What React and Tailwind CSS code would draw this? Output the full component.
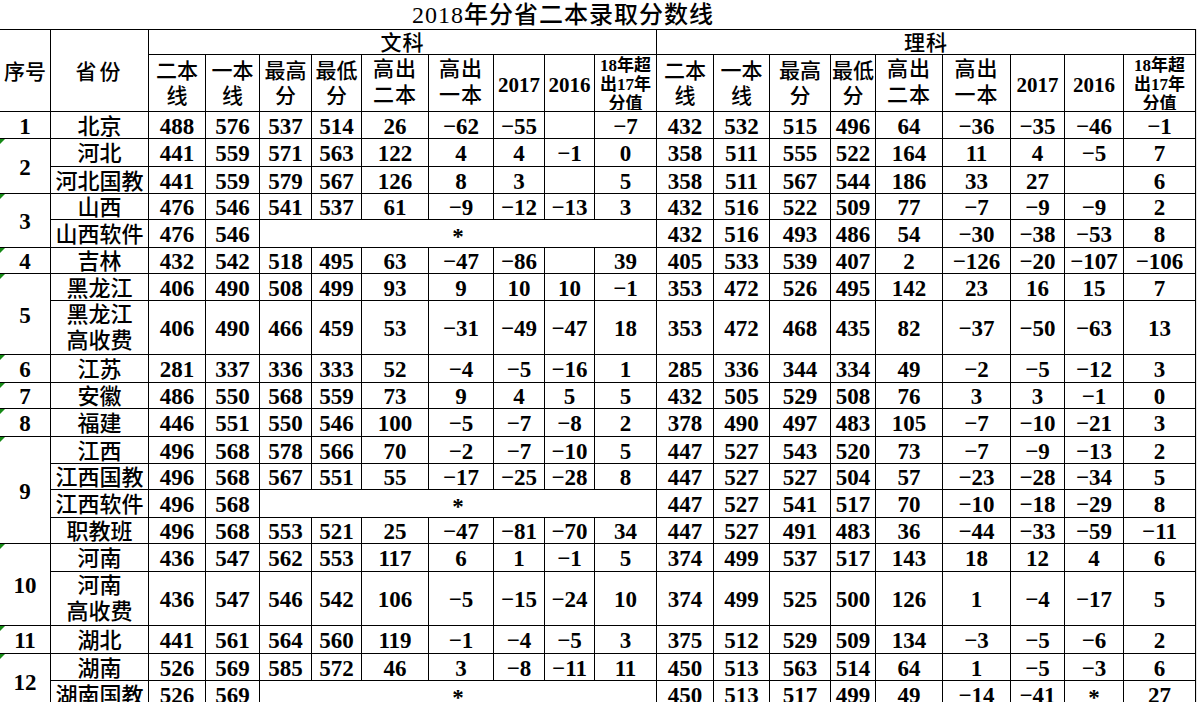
import React from "react";

const M = "−";

const colW = [
  "w-[51px]", "w-[98px]", "w-[57px]", "w-[54px]", "w-[52px]", "w-[50px]", "w-[67px]", "w-[65px]", "w-[51px]", "w-[50px]", "w-[62px]",
  "w-[57px]", "w-[56px]", "w-[61px]", "w-[45px]", "w-[67px]", "w-[68px]", "w-[54px]", "w-[59px]", "w-[72px]",
];

const rows = [
  { seq: "1", span: 1, prov: "北京", h: "h-[27px]", wen: ["488", "576", "537", "514", "26", M + "62", M + "55", "", M + "7"], li: ["432", "532", "515", "496", "64", M + "36", M + "35", M + "46", M + "1"] },
  { seq: "2", span: 2, tri: true, prov: "河北", h: "h-[28px]", wen: ["441", "559", "571", "563", "122", "4", "4", M + "1", "0"], li: ["358", "511", "555", "522", "164", "11", "4", M + "5", "7"] },
  { prov: "河北国教", h: "h-[27px]", wen: ["441", "559", "579", "567", "126", "8", "3", "", "5"], li: ["358", "511", "567", "544", "186", "33", "27", "", "6"] },
  { seq: "3", span: 2, tri: true, prov: "山西", h: "h-[26px]", wen: ["476", "546", "541", "537", "61", M + "9", M + "12", M + "13", "3"], li: ["432", "516", "522", "509", "77", M + "7", M + "9", M + "9", "2"] },
  { prov: "山西软件", h: "h-[28px]", wen: ["476", "546", "*"], li: ["432", "516", "493", "486", "54", M + "30", M + "38", M + "53", "8"] },
  { seq: "4", span: 1, tri: true, prov: "吉林", h: "h-[26px]", wen: ["432", "542", "518", "495", "63", M + "47", M + "86", "", "39"], li: ["405", "533", "539", "407", "2", M + "126", M + "20", M + "107", M + "106"] },
  { seq: "5", span: 2, tri: true, prov: "黑龙江", h: "h-[27px]", wen: ["406", "490", "508", "499", "93", "9", "10", "10", M + "1"], li: ["353", "472", "526", "495", "142", "23", "16", "15", "7"] },
  { prov: "黑龙江\n高收费", multi: true, h: "h-[54px]", wen: ["406", "490", "466", "459", "53", M + "31", M + "49", M + "47", "18"], li: ["353", "472", "468", "435", "82", M + "37", M + "50", M + "63", "13"] },
  { seq: "6", span: 1, tri: true, prov: "江苏", h: "h-[28px]", wen: ["281", "337", "336", "333", "52", M + "4", M + "5", M + "16", "1"], li: ["285", "336", "344", "334", "49", M + "2", M + "5", M + "12", "3"] },
  { seq: "7", span: 1, tri: true, prov: "安徽", h: "h-[26px]", wen: ["486", "550", "568", "559", "73", "9", "4", "5", "5"], li: ["432", "505", "529", "508", "76", "3", "3", M + "1", "0"] },
  { seq: "8", span: 1, tri: true, prov: "福建", h: "h-[28px]", wen: ["446", "551", "550", "546", "100", M + "5", M + "7", M + "8", "2"], li: ["378", "490", "497", "483", "105", M + "7", M + "10", M + "21", "3"] },
  { seq: "9", span: 4, tri: true, prov: "江西", h: "h-[27px]", wen: ["496", "568", "578", "566", "70", M + "2", M + "7", M + "10", "5"], li: ["447", "527", "543", "520", "73", M + "7", M + "9", M + "13", "2"] },
  { prov: "江西国教", h: "h-[26px]", wen: ["496", "568", "567", "551", "55", M + "17", M + "25", M + "28", "8"], li: ["447", "527", "527", "504", "57", M + "23", M + "28", M + "34", "5"] },
  { prov: "江西软件", h: "h-[28px]", wen: ["496", "568", "*"], li: ["447", "527", "541", "517", "70", M + "10", M + "18", M + "29", "8"] },
  { prov: "职教班", h: "h-[26px]", wen: ["496", "568", "553", "521", "25", M + "47", M + "81", M + "70", "34"], li: ["447", "527", "491", "483", "36", M + "44", M + "33", M + "59", M + "11"] },
  { seq: "10", span: 2, tri: true, prov: "河南", h: "h-[28px]", wen: ["436", "547", "562", "553", "117", "6", "1", M + "1", "5"], li: ["374", "499", "537", "517", "143", "18", "12", "4", "6"] },
  { prov: "河南\n高收费", multi: true, h: "h-[53px]", wen: ["436", "547", "546", "542", "106", M + "5", M + "15", M + "24", "10"], li: ["374", "499", "525", "500", "126", "1", M + "4", M + "17", "5"] },
  { seq: "11", span: 1, tri: true, prov: "湖北", h: "h-[28px]", wen: ["441", "561", "564", "560", "119", M + "1", M + "4", M + "5", "3"], li: ["375", "512", "529", "509", "134", M + "3", M + "5", M + "6", "2"] },
  { seq: "12", span: 2, tri: true, prov: "湖南", h: "h-[27px]", wen: ["526", "569", "585", "572", "46", "3", M + "8", M + "11", "11"], li: ["450", "513", "563", "514", "64", "1", M + "5", M + "3", "6"] },
  { prov: "湖南国教", h: "h-[27px]", wen: ["526", "569", "*"], li: ["450", "513", "517", "499", "49", M + "14", M + "41", "*", "27"] },
];

const subHeads = [
  { t: "二本\n线", k: 2 },
  { t: "一本\n线", k: 2 },
  { t: "最高\n分", k: 2 },
  { t: "最低\n分", k: 2 },
  { t: "高出\n二本\n线", k: 3 },
  { t: "高出\n一本\n线", k: 3 },
  { t: "2017", k: 1 },
  { t: "2016", k: 1 },
  { t: "18年超\n出17年\n分值", k: 4 },
];

const cellBase = "border border-black p-0 text-center align-middle overflow-hidden";
const numCell = cellBase + " pt-[3px] font-bold text-[23px] leading-[20px] whitespace-nowrap";

function SubHead({ t, k }) {
  if (k === 1) {
    return (
      <th className={cellBase + " font-bold text-[21px] leading-[20px] pt-[3px]"}>{t}</th>
    );
  }
  if (k === 2) {
    return (
      <th className={cellBase + " font-medium text-[21px] leading-[25px] whitespace-pre-line pt-[2px]"}>{t}</th>
    );
  }
  if (k === 3) {
    return (
      <th className={cellBase + " align-top"}>
        <div className="h-[55px] overflow-hidden whitespace-pre-line font-medium text-[21px] leading-[26px] pt-[1px] tracking-[1px]">{t}</div>
      </th>
    );
  }
  return (
    <th className={cellBase + " align-top"}>
      <div className="h-[55px] overflow-hidden whitespace-pre-line font-bold text-[17px] leading-[19px] pt-[1px]">{t}</div>
    </th>
  );
}

function Tri() {
  return (
    <span className="absolute left-0 top-0 w-0 h-0 border-t-[5px] border-t-[#168a16] border-r-[5px] border-r-transparent" />
  );
}

function Values({ vals }) {
  if (vals.length === 3 && vals[2] === "*") {
    return (
      <>
        <td className={numCell}>{vals[0]}</td>
        <td className={numCell}>{vals[1]}</td>
        <td colSpan={7} className={numCell + " pt-[7px]"}>*</td>
      </>
    );
  }
  return (
    <>
      {vals.map((v, i) => (
        <td key={i} className={numCell + (v === "*" ? " pt-[7px]" : "")}>{v}</td>
      ))}
    </>
  );
}

export default function App() {
  return (
    <div className="w-[1197px] h-[702px] overflow-hidden bg-white text-black font-['Liberation_Serif','Noto_Sans_CJK_SC',serif]">
      <div className="h-[29px] pl-[412px] pt-[2px] text-[24px] leading-[26px] tracking-[1px] font-medium whitespace-nowrap">
        2018年分省二本录取分数线
      </div>
      <div className="flex">
        <table className="table-fixed border-collapse w-[1196px] -ml-px shrink-0">
          <colgroup>
            {colW.map((c, i) => (
              <col key={i} className={c} />
            ))}
          </colgroup>
          <thead>
            <tr className="h-[25px]">
              <th rowSpan={2} className={cellBase + " font-medium text-[21px] leading-[20px] pt-[2px]"}>序号</th>
              <th rowSpan={2} className={cellBase + " font-medium text-[21px] leading-[20px] pt-[2px] tracking-[3px]"}>省份</th>
              <th colSpan={9} className={cellBase + " font-medium text-[21px] leading-[20px] pt-[1px] tracking-[1px]"}>文科</th>
              <th colSpan={9} className={cellBase + " font-medium text-[21px] leading-[20px] pt-[1px] tracking-[1px]"}>理科</th>
            </tr>
            <tr className="h-[57px]">
              {subHeads.map((s, i) => (
                <SubHead key={"w" + i} t={s.t} k={s.k} />
              ))}
              {subHeads.map((s, i) => (
                <SubHead key={"l" + i} t={s.t} k={s.k} />
              ))}
            </tr>
          </thead>
          <tbody>
            {rows.map((r, i) => (
              <tr key={i} className={r.h}>
                {r.seq && (
                  <td rowSpan={r.span} className={numCell + " relative"}>
                    {r.tri && <Tri />}
                    {r.seq}
                  </td>
                )}
                <td
                  className={
                    cellBase +
                    (r.multi
                      ? " pt-[1px] font-medium text-[22px] leading-[26px] whitespace-pre-line"
                      : " pt-[3px] font-medium text-[22px] leading-[20px] whitespace-nowrap")
                  }
                >
                  {r.prov}
                </td>
                <Values vals={r.wen} />
                <Values vals={r.li} />
              </tr>
            ))}
          </tbody>
        </table>
        <div className="flex-1 bg-[#e4e4e4]" />
      </div>
    </div>
  );
}
